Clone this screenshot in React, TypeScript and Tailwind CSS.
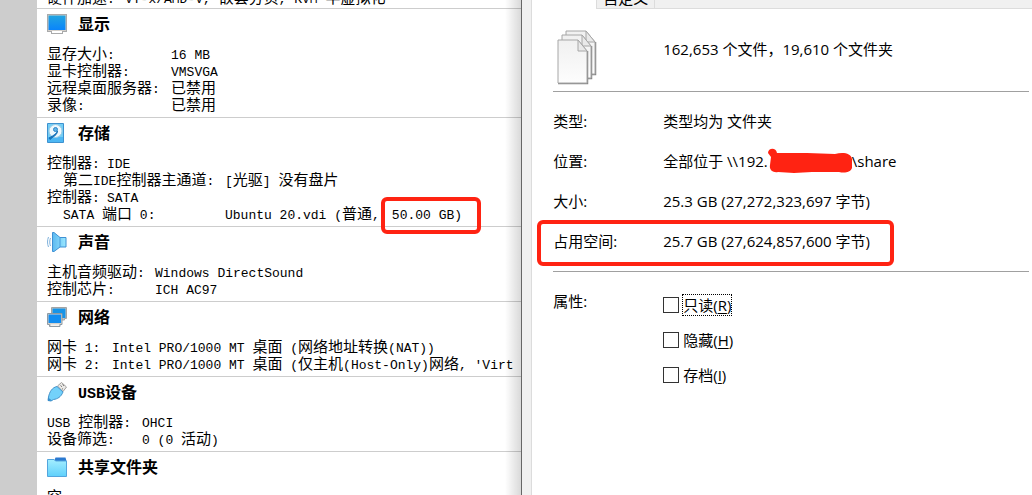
import type { ReactNode } from "react";

type DetailRow = {
  label: string;
  value: ReactNode;
  indent?: boolean;
};

type DetailSection = {
  title: string;
  icon: ReactNode;
  labelWidth: string;
  rows: DetailRow[];
};

const CJK_RUN = /([\u3000-\u9fff\uff00-\uffef]+)/;

// Chinese runs are set larger than the monospace text around them.
function Mixed({ text, size = "text-[15px]" }: { text: string; size?: string }) {
  return (
    <>
      {text.split(CJK_RUN).map((run, index) =>
        index % 2 === 1 ? (
          <span
            key={index}
            className={`font-['Noto_Sans_CJK_SC',sans-serif] ${size}`}
          >
            {run}
          </span>
        ) : (
          run
        ),
      )}
    </>
  );
}

function DisplayIcon() {
  return (
    <svg viewBox="0 0 20 20" className="h-5 w-5 shrink-0">
      <defs>
        <linearGradient id="screen" x1="0" y1="0" x2="0" y2="1">
          <stop offset="0" stopColor="#22a5e0" />
          <stop offset="1" stopColor="#0a84fb" />
        </linearGradient>
      </defs>
      <path d="M0 0h20v18h-4v2H4v-2H0z" fill="#a9aaab" />
      <path d="M1 1h18v16H1z" fill="#d3cfc9" />
      <path d="M5 17h10v2H5z" fill="#fff" />
      <path d="M1.5 1.5h17V16h-17z" fill="url(#screen)" />
    </svg>
  );
}

function DiskIcon() {
  return (
    <svg viewBox="0 0 20 20" className="h-5 w-5 shrink-0">
      <path d="M.5.5h16v19H.5z" fill="#73cef5" stroke="#3d91cf" />
      <path d="M1 14h15v5H1z" fill="#4db7f3" />
      <circle cx="8.5" cy="8" r="6.5" fill="#eef8fd" stroke="#9bcbe5" />
      <circle cx="8.5" cy="6.5" r="2" fill="#5fb2e4" stroke="#2d87ca" />
      <path
        d="M10.5 8c0 2.500-2 4.500-4.500 6L3 16.500l-1-1.500 3.500-2c2.500-1.500 4-3 5-5z"
        fill="#1673ba"
        stroke="#1673ba"
      />
    </svg>
  );
}

function SpeakerIcon() {
  return (
    <svg viewBox="0 0 20 20" className="h-5 w-5 shrink-0">
      <defs>
        <linearGradient id="cone" x1="0" y1="0" x2="1" y2="0">
          <stop offset="0" stopColor="#5cb9f0" />
          <stop offset="1" stopColor="#9be8ff" />
        </linearGradient>
      </defs>
      <path
        d="M5.500.5H7L13 5.500h6v9.500h-6L7 19.500H5.500z"
        fill="url(#cone)"
        stroke="#3f91d4"
      />
      <path d="M13 5.500V15" stroke="#4a9cdb" />
      <path
        d="M3.500 6c-1 2-1 6 0 8M1.500 5c-1.300 3-1.300 7 0 10"
        fill="none"
        stroke="#7fb2dc"
      />
    </svg>
  );
}

function NetworkIcon() {
  return (
    <svg viewBox="0 0 20 20" className="h-5 w-5 shrink-0">
      <path
        d="M4.500.5h15v11h-2V13H6v-1.500H4.500z"
        fill="#c9c5bf"
        stroke="#a4a4a4"
      />
      <path d="M5.500 1.500h13V11h-13z" fill="#1694e8" />
      <path
        d="M.5 6.500H15v11h-2v2H2.500v-2h-2z"
        fill="#d5d1cb"
        stroke="#8f9aa3"
      />
      <path d="M1.500 7.500H14V16H1.500z" fill="#118df0" />
      <path d="M4 17.500h8v1.200H4z" fill="#fff" />
    </svg>
  );
}

function UsbIcon() {
  return (
    <svg viewBox="0 0 20 20" className="h-5 w-5 shrink-0">
      <path d="m10.500 4 4-3.500 5 4.500L16 9.500z" fill="#eceae7" stroke="#a09f9d" />
      <path
        d="m13.500 3.500 1.500 1.300M15.500 2.500 17 3.800M15 6.500l1 .8"
        stroke="#777"
      />
      <path
        d="M10 4.500 16 10c-2 5-5.500 7-9.500 7.500L4 19l-3-.5L1.500 15C2.500 10 5 5.500 10 4.500z"
        fill="#73d1fa"
        stroke="#4593ca"
      />
      <path d="m1 15.500 4 3L1 19z" fill="#388dcc" />
    </svg>
  );
}

function FolderIcon() {
  return (
    <svg viewBox="0 0 20 20" className="h-5 w-5 shrink-0">
      <defs>
        <linearGradient id="folder" x1="0" y1="0" x2="0" y2="1">
          <stop offset="0" stopColor="#a4eeff" />
          <stop offset="1" stopColor="#5fd0fb" />
        </linearGradient>
      </defs>
      <path d="M7 4 8.500.5h10L19.500 4z" fill="#2b79d0" />
      <path
        d="M.5 2.500h6.500L8.500 4h11v15.500H.5z"
        fill="url(#folder)"
        stroke="#53a5dd"
      />
    </svg>
  );
}

function DocumentsIcon() {
  const sheets = [
    [9, 1],
    [5, 5],
    [1, 10],
  ];

  return (
    <svg viewBox="0 0 40 55" className="h-[55px] w-10">
      <defs>
        <linearGradient id="sheet" x1="0" y1="0" x2="0" y2="1">
          <stop offset="0" stopColor="#f0f0f0" />
          <stop offset="1" stopColor="#fdfdfd" />
        </linearGradient>
      </defs>
      {sheets.map(([x, y]) => (
        <g key={x} transform={`translate(${x} ${y})`}>
          <path d="M0 43.500h29.500V11" fill="none" stroke="#888" strokeWidth="1.500" />
          <path d="M0 0h20l9 11v32H0z" fill="url(#sheet)" stroke="#a6a6a6" />
          <path d="M20 0v11h9z" fill="#e9e9e9" stroke="#a6a6a6" />
        </g>
      ))}
    </svg>
  );
}

const sections: DetailSection[] = [
  {
    title: "显示",
    icon: <DisplayIcon />,
    labelWidth: "w-[124px]",
    rows: [
      { label: "显存大小:", value: "16 MB" },
      { label: "显卡控制器:", value: "VMSVGA" },
      { label: "远程桌面服务器:", value: "已禁用" },
      { label: "录像:", value: "已禁用" },
    ],
  },
  {
    title: "存储",
    icon: <DiskIcon />,
    labelWidth: "w-[60px]",
    rows: [
      { label: "控制器:", value: "IDE" },
      { label: "第二IDE控制器主通道:", value: "[光驱] 没有盘片", indent: true },
      { label: "控制器:", value: "SATA" },
      {
        label: "SATA 端口 0:",
        indent: true,
        value: (
          <span className="flex items-baseline gap-3">
            <span>
              <Mixed text="Ubuntu 20.vdi (普通," />
            </span>
            <span className="relative">
              50.00 GB)
              <span className="absolute -top-[10px] -left-[11px] h-[37px] w-[100px] rounded-md border-4 border-[#ff2312]" />
            </span>
          </span>
        ),
      },
    ],
  },
  {
    title: "声音",
    icon: <SpeakerIcon />,
    labelWidth: "w-[108px]",
    rows: [
      { label: "主机音频驱动:", value: "Windows DirectSound" },
      { label: "控制芯片:", value: "ICH AC97" },
    ],
  },
  {
    title: "网络",
    icon: <NetworkIcon />,
    labelWidth: "w-[65px]",
    rows: [
      { label: "网卡 1:", value: "Intel PRO/1000 MT 桌面 (网络地址转换(NAT))" },
      {
        label: "网卡 2:",
        value: "Intel PRO/1000 MT 桌面 (仅主机(Host-Only)网络, 'Virt",
      },
    ],
  },
  {
    title: "USB设备",
    icon: <UsbIcon />,
    labelWidth: "w-[95px]",
    rows: [
      { label: "USB 控制器:", value: "OHCI" },
      { label: "设备筛选:", value: "0 (0 活动)" },
    ],
  },
  {
    title: "共享文件夹",
    icon: <FolderIcon />,
    labelWidth: "w-[95px]",
    rows: [{ label: "空", value: "" }],
  },
];

function Section({ section }: { section: DetailSection }) {
  return (
    <section className="border-t border-[#cdcdcd] pb-[5px] pl-[10px]">
      <h2 className="flex h-[35px] items-center gap-[11px] pb-[6px] text-[15px] leading-5 font-bold">
        {section.icon}
        <span>
          <Mixed text={section.title} size="text-base" />
        </span>
      </h2>
      <dl>
        {section.rows.map((row, index) => (
          <div
            key={index}
            className="flex h-[17px] items-baseline leading-[17px]"
          >
            <dt
              className={`shrink-0 ${row.indent ? "ml-4 w-[162px]" : section.labelWidth}`}
            >
              <Mixed text={row.label} />
            </dt>
            <dd>
              {typeof row.value === "string" ? (
                <Mixed text={row.value} />
              ) : (
                row.value
              )}
            </dd>
          </div>
        ))}
      </dl>
    </section>
  );
}

function MachineDetails() {
  return (
    <div className="relative flex w-[50.6%] shrink-0 border-r border-[#666] bg-[#cdcdcd] font-['Liberation_Mono','Noto_Sans_CJK_SC',monospace] text-[13px]">
      <div className="ml-[37px] min-w-0 flex-1 overflow-hidden bg-white whitespace-pre">
        <div className="flex h-2 items-end pl-[10px] leading-[17px]">
          <span className="w-[78px] shrink-0">
            <Mixed text="硬件加速:" />
          </span>
          <span>
            <Mixed text="VT-x/AMD-V, 嵌套分页, KVM 半虚拟化" />
          </span>
        </div>
        {sections.map((section) => (
          <Section key={section.title} section={section} />
        ))}
      </div>
      <div className="pointer-events-none absolute inset-y-0 right-0 w-4 bg-linear-to-r from-transparent to-black/15" />
    </div>
  );
}

function PropertyRow({
  label,
  children,
}: {
  label: string;
  children: ReactNode;
}) {
  return (
    <div className="flex h-10 items-center">
      <dt className="w-[110px] shrink-0">{label}</dt>
      <dd>{children}</dd>
    </div>
  );
}

const attributes = [
  { name: "只读", hotkey: "R", focused: true },
  { name: "隐藏", hotkey: "H", focused: false },
  { name: "存档", hotkey: "I", focused: false },
];

function FolderProperties() {
  return (
    <div className="min-w-0 flex-1 bg-[#f0f0f0] pl-[9px] font-['Open_Sans','Noto_Sans_CJK_SC',sans-serif] text-[15px] leading-5">
      <div className="h-full border-l border-[#dcdcdc] bg-white whitespace-nowrap">
        <div className="flex h-[9px] pl-16">
          <div className="flex flex-1 border-b border-l border-[#dcdcdc] bg-[#f0f0f0]">
            <button
              type="button"
              className="flex h-2 w-[58px] items-end justify-center overflow-hidden border-r border-[#dcdcdc]"
            >
              自定义
            </button>
          </div>
        </div>

        <div className="pr-[3px] pl-[21px]">
          <div className="flex h-[83px] items-center border-b border-[#a0a0a0]">
            <div className="w-[110px] shrink-0 pt-[14px] pl-1">
              <DocumentsIcon />
            </div>
            <p className="pb-[2px]">162,653 个文件，19,610 个文件夹</p>
          </div>

          <dl className="h-[180px] border-b border-[#a0a0a0] pt-[9px]">
            <PropertyRow label="类型:">类型均为 文件夹</PropertyRow>
            <PropertyRow label="位置:">
              <span className="flex items-center">
                <span>{"全部位于 \\\\192."}</span>
                <svg viewBox="0 0 84 26" className="h-[26px] w-[84px]">
                  <path
                    d="M0 5C0 0 8-1 9 5h30l28 1c8-2 16-1 17 5v9c-2 5-8 5-13 4H44l-18 1-16-1c-5 1-9-2-8-7l1-8z"
                    fill="#ff2312"
                  />
                </svg>
                <span>{"\\share"}</span>
              </span>
            </PropertyRow>
            <PropertyRow label="大小:">25.3 GB (27,272,323,697 字节)</PropertyRow>
            <div className="relative">
              <PropertyRow label="占用空间:">
                25.7 GB (27,624,857,600 字节)
              </PropertyRow>
              <span className="absolute -top-px -left-4 h-[46px] w-[357px] rounded-md border-4 border-[#ff2312]" />
            </div>
          </dl>

          <div className="flex pt-[9px]">
            <span className="flex h-10 w-[110px] shrink-0 items-center">
              属性:
            </span>
            <div className="pt-[6px]">
              {attributes.map((attribute) => (
                <label
                  key={attribute.hotkey}
                  className="flex h-[35px] items-center gap-[3px]"
                >
                  <input
                    type="checkbox"
                    className="h-4 w-4 appearance-none border border-[#333] bg-white"
                  />
                  <span
                    className={
                      attribute.focused
                        ? "border border-dotted border-black"
                        : "border border-transparent"
                    }
                  >
                    {attribute.name}(
                    <span className="underline underline-offset-2">
                      {attribute.hotkey}
                    </span>
                    )
                  </span>
                </label>
              ))}
            </div>
          </div>
        </div>
      </div>
    </div>
  );
}

export default function App() {
  return (
    <main className="flex h-screen overflow-hidden text-black">
      <MachineDetails />
      <FolderProperties />
    </main>
  );
}
